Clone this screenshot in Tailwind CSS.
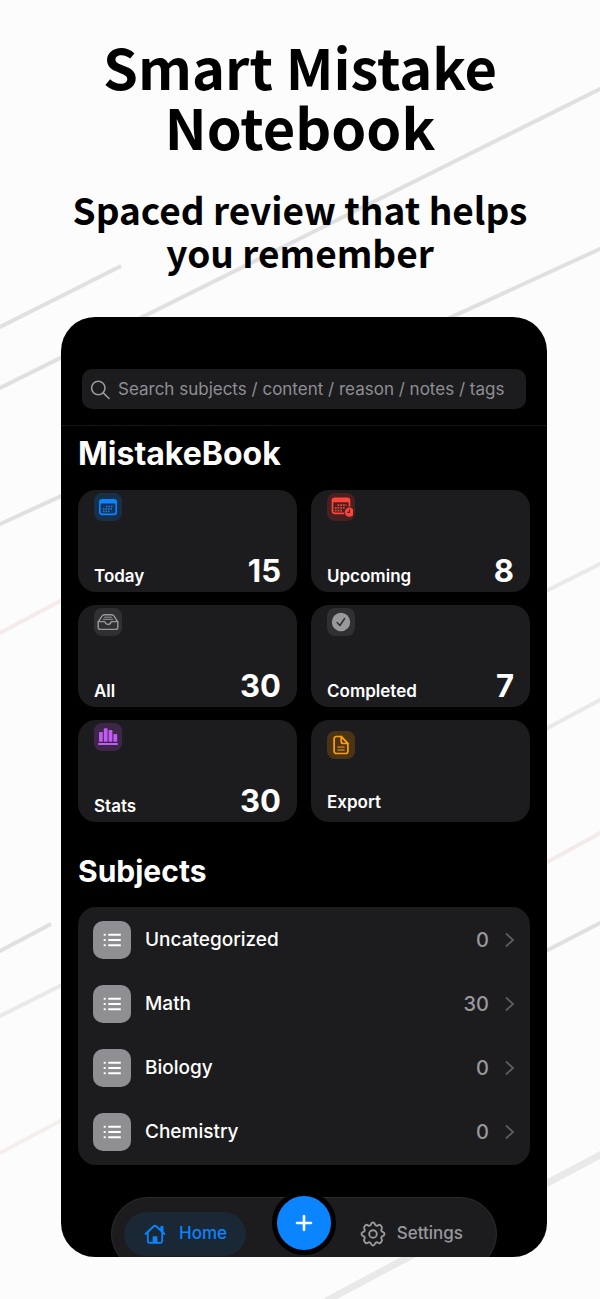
<!DOCTYPE html>
<html lang="en">
<head>
<meta charset="utf-8">
<meta name="viewport" content="width=device-width, initial-scale=1">
<title>Smart Mistake Notebook</title>
<script src="https://cdn.jsdelivr.net/npm/@tailwindcss/browser@4"></script>
</head>
<body class="relative min-h-screen overflow-x-hidden bg-[#fcfcfc] font-['Inter',sans-serif] text-white">

<!-- Diagonal background strokes -->
<svg class="absolute inset-0 h-full w-full" viewBox="0 0 600 1299" preserveAspectRatio="none" fill="none" stroke="#e0e0e0" stroke-width="4" aria-hidden="true">
  <path d="M-2 328L121 266"/>
  <path d="M-2 389L602 88"/>
  <path d="M-2 525L602 248"/>
  <path d="M-2 634L62 600" stroke="#f6eaea"/>
  <path d="M-2 952L51 924"/>
  <path d="M-2 1017L62 985" stroke="#e9e9e9"/>
  <path d="M-2 1154L62 1120" stroke="#f6eeed"/>
  <path d="M540 594L602 563" stroke="#e8eaea"/>
  <path d="M540 732L602 699" stroke="#e9e9e9"/>
  <path d="M540 866L602 832" stroke="#f3ebe9"/>
  <path d="M540 954L602 922"/>
  <path d="M326 1301L602 1154" stroke="#e9e9e9" stroke-width="7"/>
</svg>

<header class="relative px-10 pt-9 text-center font-['Noto_Sans_CJK_JP','Noto_Sans_CJK_SC',sans-serif] font-bold text-black">
  <h1 class="text-[56px] leading-[60px]">Smart Mistake<br>Notebook</h1>
  <p class="mt-8 text-[37px] leading-[43px]">Spaced review that helps<br>you remember</p>
</header>

<main class="relative mt-[43px] mr-[53px] mb-[42px] ml-[61px] overflow-hidden rounded-[34px] bg-black">
  <div class="border-b border-[#161617] px-[21px] pt-[52px] pb-4">
    <label class="flex h-10 items-center gap-2 rounded-[10px] bg-[#1c1c1e] px-2 pt-[2px]">
      <svg class="size-5 shrink-0" viewBox="0 0 20 20" fill="none" stroke="#98989e" stroke-width="1.6" stroke-linecap="round" aria-hidden="true"><circle cx="8.3" cy="8" r="6.7"/><path d="M13.2 12.9L19 18.5"/></svg>
      <input type="text" aria-label="Search" placeholder="Search subjects / content / reason / notes / tags" class="min-w-0 flex-1 bg-transparent text-[17px] outline-none placeholder:text-[#8e8e93]">
    </label>
  </div>

  <div class="px-[17px]">
    <h2 class="mt-2 text-[32px] leading-10 font-bold">MistakeBook</h2>

    <div class="mt-4 grid grid-cols-2 gap-x-[14px] gap-y-[13px] text-[17px] font-semibold">
      <button class="flex h-[102px] flex-col justify-between rounded-[18px] bg-[#1c1c1e] px-4 pt-[3px] pb-[3px] text-left">
        <span class="flex size-7 items-center justify-center rounded-lg bg-[#182f48]">
          <svg class="size-5" viewBox="0 0 20 20" fill="none" aria-hidden="true"><rect x="1.8" y="2.800" width="16.400" height="14.600" rx="2.200" fill="#0f3560" stroke="#0a84ff" stroke-width="1.700"/><path d="M1.800 6.600V4.800a2 2 0 0 1 2-2h12.400a2 2 0 0 1 2 2v1.800z" fill="#0a84ff"/><path d="M8 9.400h7M5 12h10M5 14.600h7" stroke="#2f7dcc" stroke-width="1.500" stroke-dasharray="1.500 1"/></svg>
        </span>
        <span class="flex items-end justify-between"><span class="leading-[26px]">Today</span><span class="text-[31px] leading-9 font-bold">15</span></span>
      </button>
      <button class="flex h-[102px] flex-col justify-between rounded-[18px] bg-[#1c1c1e] px-4 pt-[3px] pb-[3px] text-left">
        <span class="flex size-7 items-center justify-center rounded-lg bg-[#48201f]">
          <svg class="size-6 shrink-0" viewBox="0 0 24 24" fill="none" aria-hidden="true"><rect x="3.500" y="3.300" width="17" height="15" rx="2.200" stroke="#ff453a" stroke-width="1.700"/><path d="M3.500 7.300V5.300a2 2 0 0 1 2-2h13a2 2 0 0 1 2 2v2z" fill="#ff453a"/><path d="M8.500 10.200h9M5.800 12.900h10M5.800 15.600h8" stroke="#e8463b" stroke-width="1.700" stroke-dasharray="1.800 .9"/><circle cx="20.400" cy="17.200" r="5.600" fill="#48201f"/><circle cx="20.400" cy="17.200" r="4.600" fill="#ff453a"/><path d="M20.400 14.600v2.800h-2.200" stroke="#48201f" stroke-width="1.100"/></svg>
        </span>
        <span class="flex items-end justify-between"><span class="leading-[26px]">Upcoming</span><span class="text-[31px] leading-9 font-bold">8</span></span>
      </button>
      <button class="flex h-[102px] flex-col justify-between rounded-[18px] bg-[#1c1c1e] px-4 pt-[3px] pb-[3px] text-left">
        <span class="flex size-7 items-center justify-center rounded-lg bg-[#303032]">
          <svg class="size-6" viewBox="0 0 24 24" fill="none" stroke="#98989d" stroke-width="1.400" stroke-linejoin="round" stroke-linecap="round" aria-hidden="true"><path d="M2.200 11.800L6 6.200Q7 4.800 8.500 4.800h7Q17 4.800 18 6.200l3.800 5.600v5.400a2.200 2.200 0 0 1-2.200 2.200H4.400a2.200 2.200 0 0 1-2.200-2.200z"/><path d="M2.400 11.600H8.500c.3 0 .5.200.6.600a3 3 0 0 0 5.800 0c.1-.4.300-.6.600-.6h6.100"/><path d="M8.500 7.200h7M7.200 9.300h9.600" stroke-width="1"/></svg>
        </span>
        <span class="flex items-end justify-between"><span class="leading-[26px]">All</span><span class="text-[31px] leading-9 font-bold">30</span></span>
      </button>
      <button class="flex h-[102px] flex-col justify-between rounded-[18px] bg-[#1c1c1e] px-4 pt-[3px] pb-[3px] text-left">
        <span class="flex size-7 items-center justify-center rounded-lg bg-[#303032]">
          <svg class="size-5" viewBox="0 0 20 20" fill="none" aria-hidden="true"><circle cx="10" cy="10" r="9.200" fill="#98989d"/><path d="M6.200 10.600L8.900 13.500L13.600 6.500" stroke="#303032" stroke-width="1.500" stroke-linecap="round" stroke-linejoin="round"/></svg>
        </span>
        <span class="flex items-end justify-between"><span class="leading-[26px]">Completed</span><span class="text-[31px] leading-9 font-bold">7</span></span>
      </button>
      <button class="flex h-[102px] flex-col justify-between rounded-[18px] bg-[#1c1c1e] px-4 pt-[3px] pb-[3px] text-left">
        <span class="flex size-7 items-center justify-center rounded-lg bg-[#3d2648]">
          <svg class="size-5" viewBox="0 0 20 20" fill="#bf5af2" aria-hidden="true"><rect x="1" y="5" width="3.800" height="9.800" rx=".8"/><rect x="5.800" y="1.200" width="3.800" height="13.600" rx=".8"/><rect x="10.600" y="3" width="3.800" height="11.800" rx=".8"/><rect x="15.400" y="7" width="3.800" height="7.800" rx=".8"/><rect x="0" y="16" width="20" height="2" rx=".8"/></svg>
        </span>
        <span class="flex items-end justify-between"><span class="leading-[26px]">Stats</span><span class="text-[31px] leading-9 font-bold">30</span></span>
      </button>
      <button class="flex h-[102px] flex-col justify-between rounded-[18px] bg-[#1c1c1e] px-4 pt-[11px] pb-[6px] text-left">
        <span class="flex size-7 items-center justify-center rounded-lg bg-[#4a3413]">
          <svg class="size-5" viewBox="0 0 20 20" fill="none" stroke="#ff9f0a" stroke-width="1.700" stroke-linejoin="round" stroke-linecap="round" aria-hidden="true"><path d="M10.200 1.500H5.300A2.200 2.200 0 0 0 3.100 3.700v12.600a2.200 2.200 0 0 0 2.200 2.200h9.400a2.200 2.200 0 0 0 2.200-2.200V8.500z"/><path d="M10.200 1.500v5a2 2 0 0 0 2 2h4.700z"/><path d="M6.800 12h6.400M6.800 15h6.400" stroke-width="1.200"/></svg>
        </span>
        <span class="leading-7">Export</span>
      </button>
    </div>

    <h2 class="mt-[29px] text-[30px] leading-10 font-bold">Subjects</h2>

    <ul class="mt-4 rounded-[18px] bg-[#1c1c1e] py-px text-[19px] font-medium">
      <li><a href="#" class="flex h-16 items-center pr-[14px] pl-[15px]">
        <span class="flex size-[38px] items-center justify-center rounded-[10px] bg-[#8e8e93]"><svg class="size-5" viewBox="0 0 20 20" fill="none" stroke="#fff" stroke-width="2" stroke-linecap="round" aria-hidden="true"><path d="M7 4.700h11M7 10h11M7 15.300h11M2.500 4.700h.4M2.500 10h.4M2.500 15.300h.4"/></svg></span>
        <span class="ml-[14px] flex-1">Uncategorized</span><span class="text-[20px] text-[#98989d]">0</span>
        <svg class="ml-[15px] h-4 w-3" viewBox="0 0 12 16" fill="none" stroke="#5e5e62" stroke-width="1.800" stroke-linecap="round" stroke-linejoin="round" aria-hidden="true"><path d="M2.500 2L9 8L2.500 14"/></svg>
      </a></li>
      <li><a href="#" class="flex h-16 items-center pr-[14px] pl-[15px]">
        <span class="flex size-[38px] items-center justify-center rounded-[10px] bg-[#8e8e93]"><svg class="size-5" viewBox="0 0 20 20" fill="none" stroke="#fff" stroke-width="2" stroke-linecap="round" aria-hidden="true"><path d="M7 4.700h11M7 10h11M7 15.300h11M2.500 4.700h.4M2.500 10h.4M2.500 15.300h.4"/></svg></span>
        <span class="ml-[14px] flex-1">Math</span><span class="text-[20px] text-[#98989d]">30</span>
        <svg class="ml-[15px] h-4 w-3" viewBox="0 0 12 16" fill="none" stroke="#5e5e62" stroke-width="1.800" stroke-linecap="round" stroke-linejoin="round" aria-hidden="true"><path d="M2.500 2L9 8L2.500 14"/></svg>
      </a></li>
      <li><a href="#" class="flex h-16 items-center pr-[14px] pl-[15px]">
        <span class="flex size-[38px] items-center justify-center rounded-[10px] bg-[#8e8e93]"><svg class="size-5" viewBox="0 0 20 20" fill="none" stroke="#fff" stroke-width="2" stroke-linecap="round" aria-hidden="true"><path d="M7 4.700h11M7 10h11M7 15.300h11M2.500 4.700h.4M2.500 10h.4M2.500 15.300h.4"/></svg></span>
        <span class="ml-[14px] flex-1">Biology</span><span class="text-[20px] text-[#98989d]">0</span>
        <svg class="ml-[15px] h-4 w-3" viewBox="0 0 12 16" fill="none" stroke="#5e5e62" stroke-width="1.800" stroke-linecap="round" stroke-linejoin="round" aria-hidden="true"><path d="M2.500 2L9 8L2.500 14"/></svg>
      </a></li>
      <li><a href="#" class="flex h-16 items-center pr-[14px] pl-[15px]">
        <span class="flex size-[38px] items-center justify-center rounded-[10px] bg-[#8e8e93]"><svg class="size-5" viewBox="0 0 20 20" fill="none" stroke="#fff" stroke-width="2" stroke-linecap="round" aria-hidden="true"><path d="M7 4.700h11M7 10h11M7 15.300h11M2.500 4.700h.4M2.500 10h.4M2.500 15.300h.4"/></svg></span>
        <span class="ml-[14px] flex-1">Chemistry</span><span class="text-[20px] text-[#98989d]">0</span>
        <svg class="ml-[15px] h-4 w-3" viewBox="0 0 12 16" fill="none" stroke="#5e5e62" stroke-width="1.800" stroke-linecap="round" stroke-linejoin="round" aria-hidden="true"><path d="M2.500 2L9 8L2.500 14"/></svg>
      </a></li>
    </ul>
  </div>

  <!-- Tab bar, partly below the frame's lower edge -->
  <nav class="relative mx-[50px] mt-8 mb-[-14px] flex h-[74px] items-center justify-between rounded-full border border-[#2c2c2e] bg-[#1c1c1e] px-3 text-[17px] font-medium">
    <a href="#" class="flex h-11 w-[122px] items-center justify-center gap-3 rounded-full bg-[#1a2734] text-[#0a84ff]">
      <svg class="size-6" viewBox="0 0 24 24" fill="none" stroke="currentColor" stroke-width="1.800" stroke-linecap="round" stroke-linejoin="round" aria-hidden="true"><path d="M2.500 12L11 4Q12 3.200 13 4L21.500 12"/><path d="M4.800 10.500V19a1.800 1.800 0 0 0 1.800 1.800h10.800A1.800 1.800 0 0 0 19.200 19V10.500"/><path d="M18.200 8V5h1.400v4.500"/><path d="M9.600 20.800V15a.8.8 0 0 1 .8-.8h3.200a.8.8 0 0 1 .8.800v5.800z" fill="currentColor" stroke="none"/></svg>
      Home
    </a>
    <a href="#" class="flex h-11 items-center gap-[10px] pr-[21px] text-[#98989d]">
      <svg class="size-7" viewBox="0 0 28 28" fill="none" stroke="currentColor" stroke-width="1.900" stroke-linejoin="round" aria-hidden="true"><circle cx="14" cy="14" r="3.800"/><path d="M14 2.500C15.800 2.500 15.900 4.300 16.600 5.200C17.300 6 18.300 5.900 19.200 5.200C20.300 4.500 21.300 4.800 22.100 5.900C23 6.900 23.400 7.800 22.800 8.800C22.100 9.800 22 10.700 22.800 11.400C23.700 12.100 25.500 12.200 25.500 14C25.500 15.800 23.700 15.900 22.800 16.600C22 17.300 22.100 18.200 22.800 19.200C23.400 20.200 23 21.100 22.100 22.100C21.300 23.200 20.300 23.500 19.200 22.800C18.300 22.100 17.300 22 16.600 22.800C15.900 23.700 15.800 25.500 14 25.500C12.200 25.500 12.100 23.700 11.400 22.800C10.700 22 9.700 22.100 8.800 22.800C7.700 23.500 6.700 23.200 5.900 22.100C5 21.100 4.600 20.200 5.200 19.200C5.900 18.200 6 17.300 5.200 16.600C4.300 15.900 2.500 15.800 2.500 14C2.500 12.200 4.300 12.100 5.200 11.400C6 10.700 5.900 9.800 5.200 8.800C4.600 7.800 5 6.900 5.900 5.900C6.700 4.800 7.700 4.500 8.800 5.200C9.700 5.900 10.700 6 11.400 5.200C12.100 4.300 12.200 2.500 14 2.500Z"/></svg>
      Settings
    </a>
    <button aria-label="Add" class="absolute top-[-7px] left-1/2 flex size-16 -translate-x-1/2 items-center justify-center rounded-full border-[5px] border-black bg-[#0a84ff]">
      <svg class="size-5" viewBox="0 0 20 20" stroke="#fff" stroke-width="2.600" stroke-linecap="round" aria-hidden="true"><path d="M10 3v14M3 10h14"/></svg>
    </button>
  </nav>
</main>
</body>
</html>
